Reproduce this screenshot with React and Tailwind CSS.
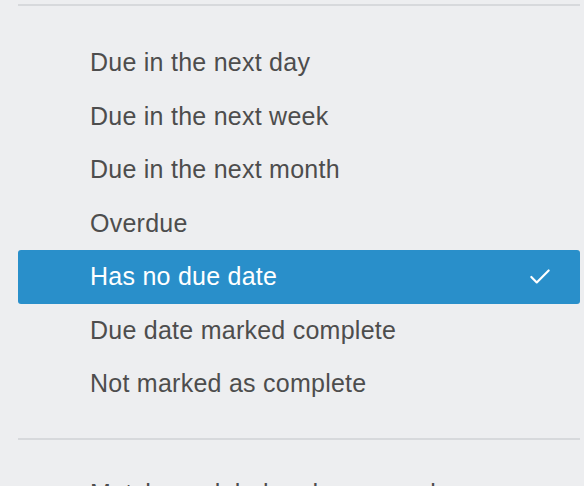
import { Check } from "lucide-react";

const dueOptions = [
  "Due in the next day",
  "Due in the next week",
  "Due in the next month",
  "Overdue",
  "Has no due date",
  "Due date marked complete",
  "Not marked as complete",
];

const SELECTED = "Has no due date";

function Divider() {
  return <div className="ml-[18px] mr-[4px] h-[2px] bg-[#d7d9dc]" />;
}

function FilterRow({ label, active }) {
  return (
    <li
      className={
        active
          ? "flex h-[53.5px] items-center justify-between rounded-[3px] bg-[#298fca] pl-[72px] pr-[27px] text-white"
          : "flex h-[53.5px] items-center pl-[72px] text-[#4d4d4d]"
      }
    >
      <span>{label}</span>
      {active && <Check className="h-[26px] w-[26px]" strokeWidth={2} />}
    </li>
  );
}

export default function App() {
  return (
    <div className="h-[486px] w-[584px] overflow-hidden bg-[#edeef0] pt-[4px] font-['Liberation_Sans',Arial,sans-serif] text-[25px] leading-none tracking-[0.25px]">
      <Divider />

      {/* due date filters */}
      <ul className="ml-[18px] mr-[4px] pt-[30px] pb-[27.5px]">
        {dueOptions.map((opt) => (
          <FilterRow key={opt} label={opt} active={opt === SELECTED} />
        ))}
      </ul>

      <Divider />

      <ul className="ml-[18px] mr-[4px] pt-[27px]">
        <FilterRow label="Match any label and any member" />
      </ul>
    </div>
  );
}
